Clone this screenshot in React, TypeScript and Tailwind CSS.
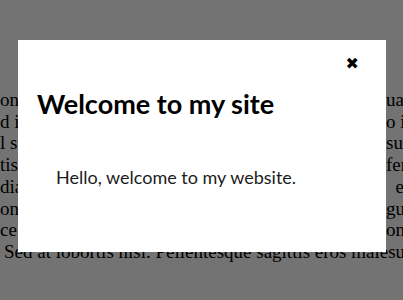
import React from "react";

const rows: [string, string][] = [
  ["on", "uam vel"],
  ["d i", "o in"],
  ["l s", "suscipit"],
  ["tis", "fermentum"],
  ["dia", "  egestas"],
  ["on", "gue"],
  ["ce", "on"],
];

const App: React.FC = () => {
  return (
    <main className="relative h-screen w-full overflow-hidden bg-white">
      {/* page text behind the modal */}
      <div className="pt-[89px] font-['Liberation_Serif',serif] text-[19px] leading-[21.7px] text-black">
        {rows.map(([left, right], i) => (
          <div key={i} className="grid grid-cols-[386px_1fr] whitespace-pre">
            <span>{left}</span>
            <span>{right}</span>
          </div>
        ))}
        <div className="whitespace-nowrap pl-1">
          Sed at lobortis nisi. Pellentesque sagittis eros malesuada
        </div>
      </div>

      {/* overlay */}
      <div className="absolute inset-0 bg-black/55" />

      {/* modal */}
      <div className="absolute left-[18px] top-[40px] h-[212px] w-[368px] bg-white font-['Lato',sans-serif]">
        <div className="flex justify-end pr-[27px] pt-[16px]">
          <button className="font-['DejaVu_Sans',sans-serif] text-[16px] leading-none text-black">
            ✖
          </button>
        </div>
        <h1 className="mt-[18px] pl-[19px] text-[27px] font-bold leading-none text-black">
          Welcome to my site
        </h1>
        <p className="mt-[51px] pl-[38px] text-[18px] leading-none text-[#1c1c1c]">
          Hello, welcome to my website.
        </p>
      </div>
    </main>
  );
};

export default App;
